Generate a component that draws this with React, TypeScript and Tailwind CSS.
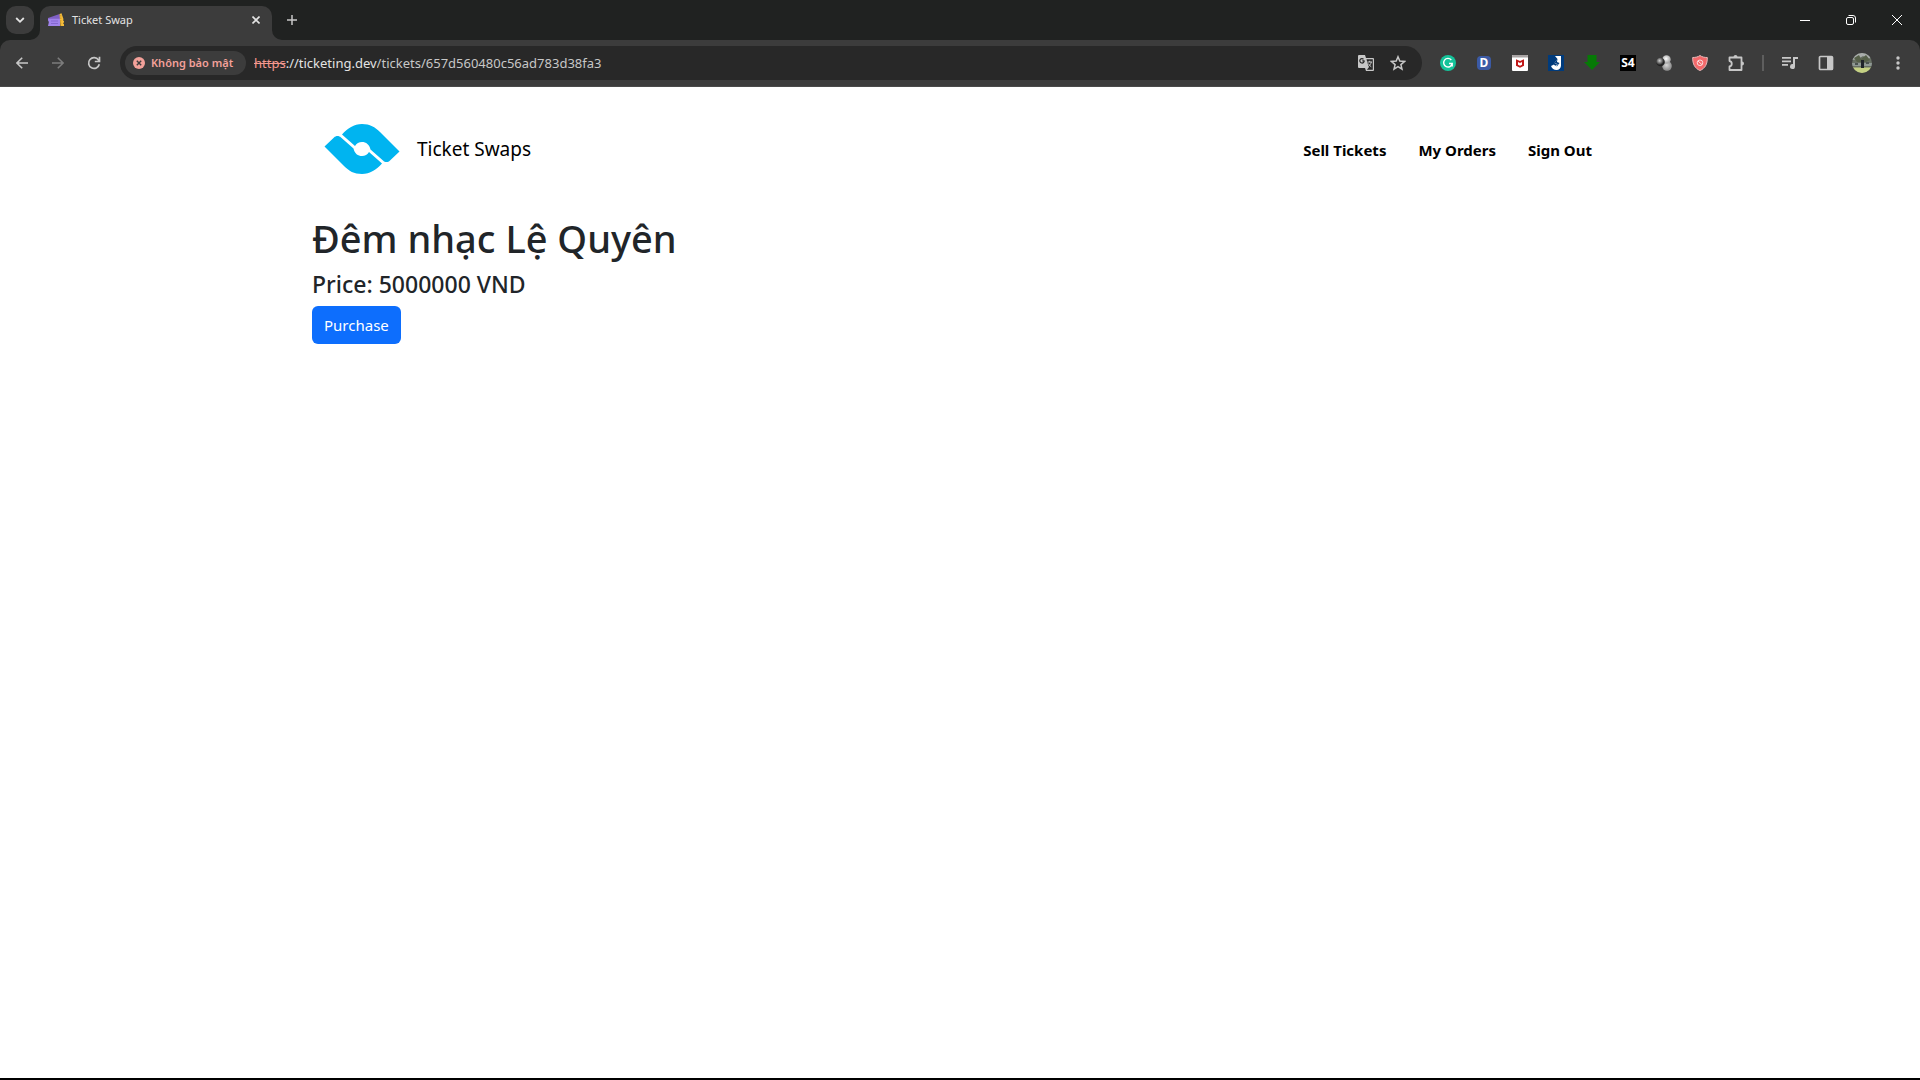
import React from "react";

type Kids = { children: React.ReactNode };

function Cell({ label, children }: Kids & { label: string }) {
  return (
    <button type="button" aria-label={label} className="flex h-9 w-9 shrink-0 items-center justify-center">
      {children}
    </button>
  );
}

function TicketIcon() {
  return (
    <svg width="16" height="16" viewBox="0 0 16 16">
      <path d="M0 6 11.500 2l1 4.500V9L0 9z" fill="#7f5fc4" />
      <path d="M0 6.800h12V14H0l.8-3.500z" fill="#a083ea" />
      <path d="M3 9h7M3 11.500h7" stroke="#8467cf" strokeWidth="1.200" />
      <path d="m11.500 2 2-.8 2 6-.5 1 1 1v1l-1 1 1 1V14h-3.500z" fill="#f5bd3a" />
      <path d="M12.800 3v10.500" stroke="#c98d1f" strokeWidth=".8" strokeDasharray="1.500 1" />
    </svg>
  );
}

function TabStrip() {
  return (
    <div className="flex h-10 justify-between bg-[#202221] text-[#e3e3e3]">
      <div className="flex">
        <button
          type="button"
          aria-label="Search tabs"
          className="ml-1.5 mt-1.5 flex h-7 w-7 items-center justify-center rounded-[10px] bg-[#3c3c3c]"
        >
          <svg width="10" height="10" viewBox="0 0 10 10" fill="none" stroke="#e3e3e3" strokeWidth="1.8">
            <path d="m1.200 3 3.800 3.800L8.800 3" />
          </svg>
        </button>
        <div className="relative ml-1.5 mt-1.5 flex w-58 items-center rounded-t-[10px] bg-[#3c3c3c] pb-1.5 pl-2 pr-2">
          <svg className="absolute bottom-0 -left-2.5" width="10" height="10" viewBox="0 0 10 10">
            <path d="M10 0v10H0A10 10 0 0 0 10 0z" fill="#3c3c3c" />
          </svg>
          <svg className="absolute bottom-0 -right-2.5" width="10" height="10" viewBox="0 0 10 10">
            <path d="M0 0v10h10A10 10 0 0 1 0 0z" fill="#3c3c3c" />
          </svg>
          <TicketIcon />
          <span className="ml-2 flex-1 text-[11px] leading-4">Ticket Swap</span>
          <button type="button" aria-label="Close tab" className="flex h-4 w-4 items-center justify-center">
            <svg width="8" height="8" viewBox="0 0 8 8" stroke="#e3e3e3" strokeWidth="1.600">
              <path d="m.5.5 7 7m0-7-7 7" />
            </svg>
          </button>
        </div>
        <button type="button" aria-label="New tab" className="ml-1.5 flex h-10 w-7 items-center justify-center">
          <svg width="10" height="10" viewBox="0 0 10 10" stroke="#c7c7c7" strokeWidth="1.500">
            <path d="M5 0v10M0 5h10" />
          </svg>
        </button>
      </div>
      <div className="flex">
        <button type="button" aria-label="Minimize" className="flex h-10 w-[46px] items-center justify-center">
          <svg width="10" height="10" viewBox="0 0 10 10" stroke="#fff">
            <path d="M0 5.500h10" />
          </svg>
        </button>
        <button type="button" aria-label="Restore" className="flex h-10 w-[46px] items-center justify-center">
          <svg width="10" height="10" viewBox="0 0 10 10" stroke="#fff" fill="none">
            <rect x=".5" y="2.500" width="7" height="7" rx="1.500" />
            <path d="M2.500.5H7A2.500 2.500 0 0 1 9.500 3v4.500" />
          </svg>
        </button>
        <button type="button" aria-label="Close window" className="flex h-10 w-[46px] items-center justify-center">
          <svg width="10" height="10" viewBox="0 0 10 10" stroke="#fff">
            <path d="m0 0 10 10m0-10L0 10" />
          </svg>
        </button>
      </div>
    </div>
  );
}

function AddressBar() {
  return (
    <div className="ml-2 mr-2 flex h-[34px] flex-1 items-center rounded-full bg-[#282828] pl-[5px] pr-2">
      <button
        type="button"
        className="flex h-6 w-[121px] shrink-0 items-center rounded-full bg-[#3c3c3c] pl-2 text-[11px] font-semibold leading-4 text-[#f3a19a]"
      >
        <svg className="mr-1.5" width="12" height="12" viewBox="0 0 12 12">
          <circle cx="6" cy="6" r="6" fill="#f3a19a" />
          <path d="m3.800 3.800 4.400 4.400m0-4.400L3.800 8.200" stroke="#3c3c3c" strokeWidth="1.400" />
        </svg>
        Không bảo mật
      </button>
      <label htmlFor="address" className="ml-2 text-[13px] leading-5 text-[#e3e3e3]">
        <span className="text-[#f3978e] line-through">https</span>://ticketing.dev
      </label>
      <input
        id="address"
        className="min-w-0 flex-1 bg-transparent text-[13px] leading-5 text-[#c7c7c7] outline-none"
        defaultValue="/tickets/657d560480c56ad783d38fa3"
      />
      <button type="button" aria-label="Translate this page" className="flex h-8 w-8 items-center justify-center">
        <svg width="18" height="18" viewBox="0 0 18 18">
          <path d="M2 1h6l1 3h7a1 1 0 0 1 1 1v11a1 1 0 0 1-1 1H9l-1-3H2a1 1 0 0 1-1-1V2a1 1 0 0 1 1-1z" fill="#c7c7c7" />
          <path d="M9.500 5.200h6.300v10.600H9.800l2-2.300z" fill="#282828" />
          <path d="M7.200 6.800H5.300M7.200 6.600a2.200 2.200 0 1 1-.7-1.400" fill="none" stroke="#282828" strokeWidth="1.200" />
          <path d="M10.500 8h4.500M12.700 6.800V8m1.600 0c-.4 2-1.500 3.500-3 4.500m0-3c.6 1.300 1.800 2.500 3 3.300" fill="none" stroke="#c7c7c7" strokeWidth="1" />
        </svg>
      </button>
      <button type="button" aria-label="Bookmark this tab" className="flex h-8 w-8 items-center justify-center">
        <svg width="16" height="16" viewBox="0 0 16 16" fill="none" stroke="#c7c7c7" strokeWidth="1.500">
          <path d="m8 1.800 1.800 4.300 4.700.4-3.600 3.100 1.100 4.600L8 11.700l-4 2.500 1.100-4.600-3.600-3.100 4.700-.4z" />
        </svg>
      </button>
    </div>
  );
}

function Extensions() {
  return (
    <>
      <Cell label="Grammarly">
        <svg width="16" height="16" viewBox="0 0 16 16">
          <circle cx="8" cy="8" r="8" fill="#15c39a" />
          <path d="M11.300 5A4.300 4.300 0 1 0 12.200 8.500H9m3.200 0v3" fill="none" stroke="#fff" strokeWidth="1.400" />
        </svg>
      </Cell>
      <Cell label="Dictionary">
        <span className="flex h-3.5 w-3.5 items-center justify-center rounded-sm bg-[#3b5aa5] text-[12px] font-bold leading-none text-white">
          D
        </span>
      </Cell>
      <Cell label="McAfee">
        <svg width="16" height="16" viewBox="0 0 16 16">
          <rect width="16" height="16" rx="1" fill="#fff" />
          <path d="M0 1a1 1 0 0 1 1-1h14a1 1 0 0 1 1 1v1.500H0z" fill="#a8a3a3" />
          <path d="M4 4.200 8 6l4-1.800v6.600l-4 2-4-2zM6 7v2.700l2 1 2-1V7L8 8z" fill="#c01818" fillRule="evenodd" />
        </svg>
      </Cell>
      <Cell label="JSON helper">
        <svg width="16" height="16" viewBox="0 0 16 16">
          <path d="M0 0h16v16H0z" fill="#003b7c" />
          <path d="M7 1h6v9.500A4.500 4.500 0 0 1 8.500 15C6 15 4 13.500 3 11l3-1.500c.5 1.500 3 1.500 3 0L6.500 8 9.500 4z" fill="#fff" />
          <path d="M9.500 4 6.500 8l3 1-1 3 3-4-2.500-1z" fill="#003b7c" />
        </svg>
      </Cell>
      <Cell label="Downloader">
        <svg width="16" height="16" viewBox="0 0 16 16">
          <path d="M3.500 0h9v7H16l-8 8-8-8h3.500z" fill="#067a06" />
        </svg>
      </Cell>
      <Cell label="S4">
        <span className="flex h-4 w-4 items-center justify-center bg-black text-[12px] font-bold leading-none text-white">
          S4
        </span>
      </Cell>
      <Cell label="Molecule">
        <svg width="16" height="16" viewBox="0 0 16 16">
          <defs>
            <radialGradient id="dark" cx=".4" cy=".35">
              <stop offset="0" stopColor="#d5d5d5" />
              <stop offset="1" stopColor="#222" />
            </radialGradient>
            <radialGradient id="light" cx=".45" cy=".4">
              <stop offset="0" stopColor="#fff" />
              <stop offset="1" stopColor="#aaa" />
            </radialGradient>
          </defs>
          <circle cx="11" cy="11" r="4.800" fill="url(#light)" opacity=".8" />
          <circle cx="10.500" cy="4.500" r="4.200" fill="url(#light)" />
          <circle cx="4.500" cy="7" r="4.300" fill="url(#dark)" />
        </svg>
      </Cell>
      <Cell label="Ad blocker">
        <svg width="16" height="16" viewBox="0 0 16 16">
          <path d="M8 .5c2 1.500 4.500 2 7.300 2C15.500 9 13 13.500 8 15.500 3 13.500.5 9 .7 2.500c2.800 0 5.300-.5 7.300-2z" fill="#f4696b" stroke="#e8b9b9" />
          <circle cx="8" cy="7.800" r="2.800" fill="none" stroke="#fbdada" />
          <path d="m6 6 4 3.700" stroke="#fbdada" />
        </svg>
      </Cell>
      <Cell label="Extensions">
        <svg width="18" height="18" viewBox="0 0 18 18">
          <path
            d="M2.500 3.500h12v12.500h-12v-3.500c3-.5 3-5 0-5.500z"
            fill="none"
            stroke="#c7c7c7"
            strokeWidth="1.800"
            strokeLinejoin="round"
          />
          <path d="M6.500 3a2 2 0 0 1 4 0zM15 7.500a2 2 0 0 1 0 4z" fill="#c7c7c7" />
        </svg>
      </Cell>
    </>
  );
}

function Toolbar() {
  return (
    <div className="bg-[#202221]">
      <div className="flex h-[47px] items-center rounded-t-[10px] border-b border-[#4a4a4a] bg-[#3c3c3c] pl-1 pr-1">
        <Cell label="Back">
          <svg width="12" height="12" viewBox="0 0 12 12" fill="none" stroke="#c7c7c7" strokeWidth="1.600">
            <path d="M12 6H1M6.200.7.9 6l5.300 5.300" />
          </svg>
        </Cell>
        <Cell label="Forward">
          <svg width="12" height="12" viewBox="0 0 12 12" fill="none" stroke="#7c7c7c" strokeWidth="1.600">
            <path d="M0 6h11M5.800.7 11.100 6l-5.300 5.300" />
          </svg>
        </Cell>
        <Cell label="Reload">
          <svg width="14" height="14" viewBox="0 0 14 14" fill="none" stroke="#c7c7c7" strokeWidth="1.700">
            <path d="M12.300 8.200A5.400 5.400 0 1 1 11.500 4L12.300 5.200M12.500.8v4.700H7.800" />
          </svg>
        </Cell>
        <AddressBar />
        <Extensions />
        <div className="flex w-4.5 justify-center">
          <div className="h-4 w-0.5 bg-[#5e5e5e]" />
        </div>
        <Cell label="Media controls">
          <svg width="16" height="14" viewBox="0 0 16 14" fill="#c7c7c7">
            <path d="M0 1h9v1.700H0zM0 4.500h9v1.700H0zM0 8h6v1.700H0zM11 1h5v2h-3v7.500a2.500 2.500 0 1 1-2-2.400z" />
          </svg>
        </Cell>
        <Cell label="Side panel">
          <svg width="16" height="16" viewBox="0 0 16 16">
            <rect x="1.500" y="1.500" width="13" height="13" rx="1" fill="none" stroke="#c7c7c7" strokeWidth="1.700" />
            <path d="M9 2h5v12H9z" fill="#c7c7c7" />
          </svg>
        </Cell>
        <Cell label="Profile">
          <svg width="20" height="20" viewBox="0 0 20 20">
            <defs>
              <clipPath id="avatar">
                <circle cx="10" cy="10" r="10" />
              </clipPath>
            </defs>
            <g clipPath="url(#avatar)">
              <path d="M0 0h20v20H0z" fill="#687064" />
              <path d="M0 0h20v4l-4 2-5-3-5 3-6 1z" fill="#a9adab" />
              <path d="M2 5l5-3 2 4 5-4 4 5-4 2H5z" fill="#566049" />
              <path d="M0 10h20v3H0z" fill="#8f9894" />
              <path d="M0 14.500h20V20H0z" fill="#c5d183" />
              <path d="M9 7h3v8H9z" fill="#20242a" />
              <path d="M3 10h3v2H3zM14 9h3v2h-3z" fill="#4b5350" />
            </g>
          </svg>
        </Cell>
        <Cell label="Menu">
          <svg width="4" height="14" viewBox="0 0 4 14" fill="#c7c7c7">
            <circle cx="2" cy="2" r="1.700" />
            <circle cx="2" cy="7" r="1.700" />
            <circle cx="2" cy="12" r="1.700" />
          </svg>
        </Cell>
      </div>
    </div>
  );
}

function Logo() {
  const half =
    "M18 10.500C23.500 4.500 30 0 38 0c8 0 13 3 18 8l19.500 19.500-9.500 9c-2 2-5 2-7 0L46.500 25.500C45.500 20.500 42 18 38 18c-3 0-5.500 1.500-7 4z";
  return (
    <svg width="76" height="50" viewBox="0 0 76 50" fill="#00b4f0" aria-hidden="true">
      <path d={half} />
      <path d={half} transform="rotate(180 38 25)" />
    </svg>
  );
}

function Page() {
  return (
    <div className="mx-auto w-full max-w-[1320px] px-3 text-[#212529]">
      <header className="flex items-center justify-between px-3 pt-[37px]">
        <a href="#home" className="flex items-center text-[19px] leading-7 text-black">
          <Logo />
          <span className="ml-[17px]">Ticket Swaps</span>
        </a>
        <nav className="flex gap-8 pr-1 pt-0.5 text-[15px] font-bold leading-6 text-black">
          <a href="#sell">Sell Tickets</a>
          <a href="#orders">My Orders</a>
          <a href="#signout">Sign Out</a>
        </nav>
      </header>
      <main className="pt-10">
        <h1 className="text-[38px] font-medium leading-12">Đêm nhạc Lệ Quyên</h1>
        <h4 className="mt-2 text-[23px] font-medium leading-7">Price: 5000000 VND</h4>
        <button type="button" className="mt-2 h-[38px] rounded-md bg-[#0d6efd] px-3 text-[15px] leading-6 text-white">
          Purchase
        </button>
      </main>
    </div>
  );
}

export default function App() {
  return (
    <div className="flex min-h-screen flex-col border-b-2 border-black bg-white font-['Noto_Sans',sans-serif]">
      <TabStrip />
      <Toolbar />
      <Page />
    </div>
  );
}
